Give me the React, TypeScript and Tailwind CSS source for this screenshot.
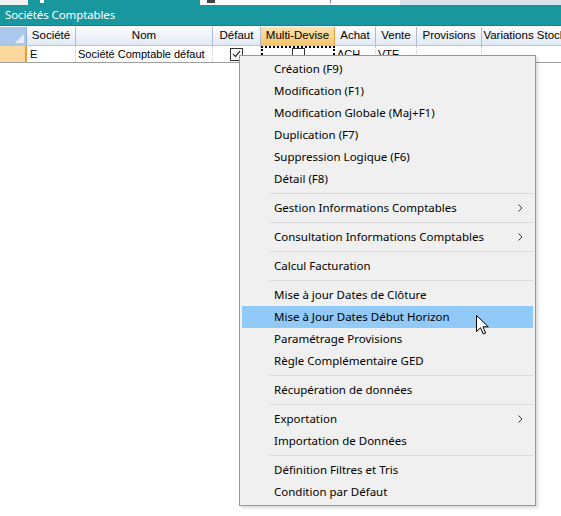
import React from 'react';

type Item = { label: string; sub?: boolean; hot?: boolean } | 'sep';

const menuItems: Item[] = [
  { label: 'Création (F9)' },
  { label: 'Modification (F1)' },
  { label: 'Modification Globale (Maj+F1)' },
  { label: 'Duplication (F7)' },
  { label: 'Suppression Logique (F6)' },
  { label: 'Détail (F8)' },
  'sep',
  { label: 'Gestion Informations Comptables', sub: true },
  'sep',
  { label: 'Consultation Informations Comptables', sub: true },
  'sep',
  { label: 'Calcul Facturation' },
  'sep',
  { label: 'Mise à jour Dates de Clôture' },
  { label: 'Mise à Jour Dates Début Horizon', hot: true },
  { label: 'Paramétrage Provisions' },
  { label: 'Règle Complémentaire GED' },
  'sep',
  { label: 'Récupération de données' },
  'sep',
  { label: 'Exportation', sub: true },
  { label: 'Importation de Données' },
  'sep',
  { label: 'Définition Filtres et Tris' },
  { label: 'Condition par Défaut' },
];

const columns = [
  { name: 'Société', w: 'w-[49px]' },
  { name: 'Nom', w: 'w-[137px]' },
  { name: 'Défaut', w: 'w-[48px]' },
  { name: 'Multi-Devise', w: 'w-[74px]', active: true },
  { name: 'Achat', w: 'w-[41px]' },
  { name: 'Vente', w: 'w-[41px]' },
  { name: 'Provisions', w: 'w-[65px]' },
  { name: 'Variations Stock', w: 'w-[86px]' },
];

const CheckBox = ({ checked }: { checked?: boolean }) => (
  <div className="w-[13px] h-[13px] border border-[#333] bg-white flex items-center justify-center">
    {checked && (
      <svg width="9" height="8" viewBox="0 0 9 8">
        <path d="M1 4 L3.5 6.5 L8 1" fill="none" stroke="#333" strokeWidth="1.2" />
      </svg>
    )}
  </div>
);

export default function App() {
  return (
    <div
      className="relative w-[561px] h-[516px] bg-white overflow-hidden"
      style={{ fontFamily: '"Liberation Sans", Arial, sans-serif' }}
    >
      {/* tab strip, cut at the top */}
      <div className="flex h-[5px]">
        <div className="w-[28px] bg-[#f2f2f2]" />
        <div className="w-[172px] bg-[#19979e] relative">
          <div className="absolute left-[12px] top-0 w-[4px] h-[3px] bg-white" />
        </div>
        <div className="w-[200px] bg-white relative">
          <div className="absolute left-[7px] top-0 w-[8px] h-[3px] bg-[#444]" />
          <div className="absolute left-[130px] top-0 w-[1px] h-[3px] bg-[#8a6fb0]" />
        </div>
        <div className="flex-1 bg-[#d9e1ea]" />
      </div>

      {/* title bar */}
      <div
        className="h-[20px] bg-[#19979e] text-white text-[11.5px] pl-[5px] flex items-center tracking-[-0.1px]"
        style={{ fontFamily: '"Noto Sans", sans-serif' }}
      >
        Sociétés Comptables
      </div>
      <div className="h-[1px] bg-[#5d6567]" />
      <div className="h-[1px] bg-[#f3f5f8]" />

      {/* header */}
      <div className="flex h-[19px] text-[11.5px] text-black border-b border-[#b7c4d6]">
        <div className="w-[27px] shrink-0 bg-[#a9c8ec] border-r border-[#8fb0d8] relative">
          <svg className="absolute left-[15px] top-[7px]" width="9" height="9" viewBox="0 0 9 9">
            <path d="M9 0 L9 9 L0 9 Z" fill="#e4edf8" />
          </svg>
        </div>
        {columns.map((c) => (
          <div
            key={c.name}
            className={`${c.w} shrink-0 flex items-center justify-center whitespace-nowrap border-r ${
              c.active
                ? 'bg-gradient-to-b from-[#fde4ad] to-[#f6c46c] border-[#e3a646]'
                : 'bg-gradient-to-b from-[#fbfcfe] to-[#e1e9f4] border-[#aebcd2]'
            }`}
          >
            {c.name}
          </div>
        ))}
      </div>

      {/* data row */}
      <div className="flex h-[17px] text-[11px] text-black border-b border-[#a0a0a0]">
        <div className="w-[27px] shrink-0 bg-[#fdd89e] border-r-2 border-[#f19a35]" />
        <div className="w-[49px] shrink-0 pl-[3px] flex items-center border-r border-dotted border-[#c8c8c8]">E</div>
        <div className="w-[137px] shrink-0 pl-[2px] flex items-center whitespace-nowrap border-r border-dotted border-[#c8c8c8]">
          Société Comptable défaut
        </div>
        <div className="w-[48px] shrink-0 flex items-center justify-center border-r border-dotted border-[#c8c8c8]">
          <CheckBox checked />
        </div>
        <div className="w-[74px] shrink-0 flex items-center justify-center border-2 border-dotted border-black">
          <CheckBox />
        </div>
        <div className="w-[41px] shrink-0 pl-[2px] flex items-center border-r border-dotted border-[#c8c8c8]">ACH</div>
        <div className="w-[41px] shrink-0 pl-[2px] flex items-center border-r border-dotted border-[#c8c8c8]">VTE</div>
        <div className="w-[65px] shrink-0 border-r border-dotted border-[#c8c8c8]" />
        <div className="flex-1" />
      </div>

      {/* context menu */}
      <div
        className="absolute left-[239px] top-[55px] w-[297px] bg-[#f0f0f0] border border-[#979797] p-[2px] text-[11.5px] text-black shadow-[2px_2px_3px_rgba(0,0,0,0.15)]"
        style={{ fontFamily: '"Noto Sans", sans-serif' }}
      >
        {menuItems.map((it, i) =>
          it === 'sep' ? (
            <div key={i} className="h-[7px] flex items-center pl-[28px]">
              <div className="h-[1px] w-full bg-[#d7d7d7]" />
            </div>
          ) : (
            <div
              key={i}
              className={`h-[22px] flex items-center pl-[32px] pr-[10px] whitespace-nowrap ${it.hot ? 'bg-[#91c9f7]' : ''}`}
            >
              <span className="flex-1">{it.label}</span>
              {it.sub && (
                <svg width="5" height="8" viewBox="0 0 5 8">
                  <path d="M0.5 0.5 L4 4 L0.5 7.5" fill="none" stroke="#333" strokeWidth="1" />
                </svg>
              )}
            </div>
          )
        )}
      </div>

      {/* mouse pointer */}
      <svg className="absolute left-[476px] top-[315px]" width="14" height="21" viewBox="0 0 14 21">
        <path
          d="M0.5 0.5 L0.5 16.5 L4.5 12.8 L7.2 19 L9.6 18 L7 11.8 L12.3 11.8 Z"
          fill="white"
          stroke="black"
          strokeWidth="1"
          strokeLinejoin="round"
        />
      </svg>
    </div>
  );
}
